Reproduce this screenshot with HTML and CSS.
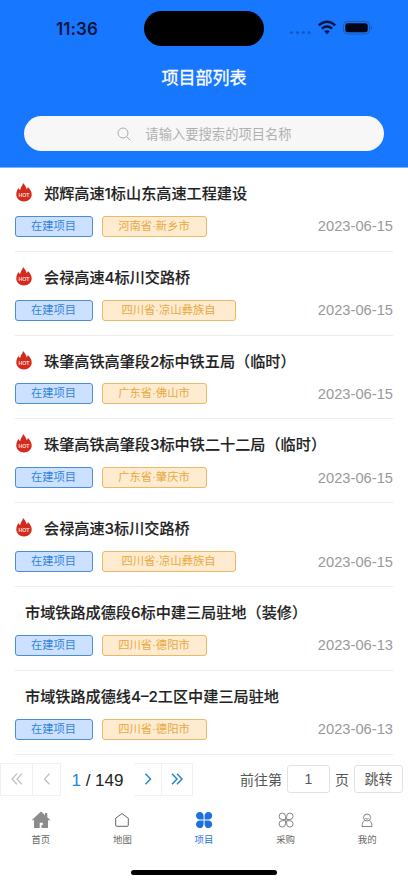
FILE: index.html
```html
<!DOCTYPE html>
<html lang="zh-CN">
<head>
<meta charset="utf-8">
<title>项目部列表</title>
<link rel="stylesheet" href="styles.css">
</head>
<body>
<svg width="0" height="0" class="defs">
  <symbol id="hot" viewBox="0 0 16 19">
    <path d="M7 0C8.600 1.700 10 3.500 10.600 6C11.400 5.500 11.700 4.800 11.900 3.900C14.400 6.300 15.700 8.700 15.700 11.500C15.700 15.600 12.300 18.500 8 18.500S.3 15.600.3 11.500C.3 8.800 1.300 6.800 2.700 5.100C3 6.100 3.400 6.700 4.200 7.100C4.200 4.200 6.700 3 7 0Z" fill="#d32c1f"/>
  </symbol>
</svg>
<div class="screen">
  <header class="header">
    <div class="status">
      <span class="time">11:36</span>
      <span class="island"></span>
      <svg class="signals" width="84" height="18" viewBox="0 0 84 18">
        <g fill="#1459c2"><circle cx="2.500" cy="13.500" r="1.600"/><circle cx="8.500" cy="13.500" r="1.600"/><circle cx="14.300" cy="13.500" r="1.600"/><circle cx="20" cy="13.500" r="1.600"/></g>
        <g fill="none" stroke="#06143f" stroke-width="2.400"><path d="M29.700 6.300Q38 -.7 46.300 6.300"/><path d="M32.800 9.600Q38 5.400 43.200 9.600"/></g>
        <path d="M35.200 12.200Q38 10.200 40.800 12.200L38 15.200Z" fill="#06143f"/>
        <rect x="54.500" y="2.500" width="26" height="12.500" rx="3.800" fill="none" stroke="#2358a5"/>
        <rect x="56.300" y="4.300" width="22.400" height="9" rx="2.300" fill="#020715"/>
        <path d="M82 6.700Q84 8.700 82 10.800Z" fill="#17499c"/>
      </svg>
    </div>
    <h1 class="title">项目部列表</h1>
    <div class="search">
      <svg width="14" height="14" viewBox="0 0 14 14" fill="none" stroke="#aaa" stroke-width="1"><circle cx="6" cy="6" r="5"/><path d="M9.600 9.600L13.200 13.200"/></svg>
      <span>请输入要搜索的项目名称</span>
    </div>
  </header>

  <main class="list">
    <article class="row">
      <h2 class="name"><svg class="flame" viewBox="0 0 16 19"><use href="#hot"/><text x="8" y="13.600" text-anchor="middle" class="hot-text">HOT</text></svg>郑辉高速1标山东高速工程建设</h2>
      <div class="meta"><span class="tag state">在建项目</span><span class="tag place">河南省·新乡市</span><time>2023-06-15</time></div>
    </article>
    <article class="row">
      <h2 class="name"><svg class="flame" viewBox="0 0 16 19"><use href="#hot"/><text x="8" y="13.600" text-anchor="middle" class="hot-text">HOT</text></svg>会禄高速4标川交路桥</h2>
      <div class="meta"><span class="tag state">在建项目</span><span class="tag place wide">四川省·凉山彝族自</span><time>2023-06-15</time></div>
    </article>
    <article class="row">
      <h2 class="name"><svg class="flame" viewBox="0 0 16 19"><use href="#hot"/><text x="8" y="13.600" text-anchor="middle" class="hot-text">HOT</text></svg>珠肇高铁高肇段2标中铁五局（临时）</h2>
      <div class="meta"><span class="tag state">在建项目</span><span class="tag place">广东省·佛山市</span><time>2023-06-15</time></div>
    </article>
    <article class="row">
      <h2 class="name"><svg class="flame" viewBox="0 0 16 19"><use href="#hot"/><text x="8" y="13.600" text-anchor="middle" class="hot-text">HOT</text></svg>珠肇高铁高肇段3标中铁二十二局（临时）</h2>
      <div class="meta"><span class="tag state">在建项目</span><span class="tag place">广东省·肇庆市</span><time>2023-06-15</time></div>
    </article>
    <article class="row">
      <h2 class="name"><svg class="flame" viewBox="0 0 16 19"><use href="#hot"/><text x="8" y="13.600" text-anchor="middle" class="hot-text">HOT</text></svg>会禄高速3标川交路桥</h2>
      <div class="meta"><span class="tag state">在建项目</span><span class="tag place wide">四川省·凉山彝族自</span><time>2023-06-15</time></div>
    </article>
    <article class="row">
      <h2 class="name plain">市域铁路成德段6标中建三局驻地（装修）</h2>
      <div class="meta"><span class="tag state">在建项目</span><span class="tag place">四川省·德阳市</span><time>2023-06-13</time></div>
    </article>
    <article class="row">
      <h2 class="name plain">市域铁路成德线4–2工区中建三局驻地</h2>
      <div class="meta"><span class="tag state">在建项目</span><span class="tag place">四川省·德阳市</span><time>2023-06-13</time></div>
    </article>
  </main>

  <div class="pager">
    <div class="steps off">
      <span class="step first"><svg width="12" height="12" viewBox="0 0 12 12"><path d="M6 .7L1 6L6 11.300M11 .7L6 6L11 11.300"/></svg></span>
      <span class="step"><svg width="8" height="12" viewBox="0 0 8 12"><path d="M6.500 .7L1.500 6L6.500 11.300"/></svg></span>
    </div>
    <div class="count"><b>1</b> / 149</div>
    <div class="steps on">
      <span class="step"><svg width="8" height="12" viewBox="0 0 8 12"><path d="M1.500 .7L6.500 6L1.500 11.300"/></svg></span>
      <span class="step last"><svg width="12" height="12" viewBox="0 0 12 12"><path d="M1 .7L6 6L1 11.300M6 .7L11 6L6 11.300"/></svg></span>
    </div>
    <div class="jump"><span>前往第</span><span class="box num">1</span><span>页</span><span class="box go">跳转</span></div>
  </div>

  <nav class="tabs">
    <div class="tab"><svg width="20" height="20" viewBox="0 0 20 20"><path d="M10 1.500L.6 10.300H3V18H8.700V12.800H11.800V15H10.500V18H17V10.300H19.400L16.300 7.300V3H14V5.200Z" fill="#8c8c8c"/></svg><span>首页</span></div>
    <div class="tab"><svg width="20" height="20" viewBox="0 0 20 20"><path d="M10 3.600L3.700 8.200V15.200Q3.700 16.300 4.800 16.300H15.200Q16.300 16.300 16.300 15.200V8.200Z" fill="none" stroke="#666" stroke-linejoin="round"/></svg><span>地图</span></div>
    <div class="tab active"><svg width="20" height="20" viewBox="0 0 20 20" fill="#1e6fe0"><path d="M9.600 9.600H6A3.800 3.800 0 1 1 9.600 6Z"/><path d="M10.600 9.600H14.200A3.800 3.800 0 1 0 10.600 6Z"/><path d="M9.600 10.500H6A3.800 3.800 0 1 0 9.600 14.100Z"/><path d="M10.600 10.500H14.200A3.800 3.800 0 1 1 10.600 14.100Z"/></svg><span>项目</span></div>
    <div class="tab"><svg width="20" height="20" viewBox="0 0 20 20" fill="none" stroke="#777" stroke-width=".9"><path d="M9.500 9.500H6.300A3.200 3.200 0 1 1 9.500 6.300Z"/><path d="M10.700 9.500H13.900A3.200 3.200 0 1 0 10.700 6.300Z"/><path d="M9.500 10.700H6.300A3.200 3.200 0 1 0 9.500 13.900Z"/><path d="M10.700 10.700H13.900A3.200 3.200 0 1 1 10.700 13.900Z"/></svg><span>采购</span></div>
    <div class="tab"><svg width="20" height="20" viewBox="0 0 20 20" fill="none" stroke="#777" stroke-width=".9"><circle cx="10" cy="7.500" r="3.500"/><path d="M7.700 10.500C5.800 11.500 5.200 13.200 5 16.500H15C14.800 13.200 14.200 11.500 12.300 10.500M8.500 8.400Q10 9.700 11.500 8.400"/></svg><span>我的</span></div>
  </nav>
  <div class="home-bar"></div>
</div>
</body>
</html>
```
FILE: styles.css
```css
* { box-sizing: border-box; }
body {
  margin: 0;
  background: #fff;
  font-family: "Liberation Sans", "Noto Sans CJK SC", sans-serif;
}
.defs { position: absolute; }
.screen {
  width: 408px;
  height: 883px;
  overflow: hidden;
  display: flex;
  flex-direction: column;
}
.header {
  height: 168px;
  flex: none;
  background: #1777ff;
  border-bottom: 1px solid #7db5ff;
}
.status {
  height: 57px;
  display: grid;
  grid-template-columns: 144px 120px 1fr;
  align-items: center;
}
.time {
  padding-left: 56px;
  font: 600 17px/20px Inter, sans-serif;
  letter-spacing: .1px;
  color: #06143f;
}
.island {
  height: 35px;
  border-radius: 18px;
  background: #000;
}
.signals { margin: -2px 0 0 25px; }
.title {
  margin: 9px 0 0;
  text-align: center;
  color: #fff;
  font-size: 17px;
  line-height: 26px;
  font-weight: 400;
  -webkit-text-stroke: .3px #fff;
}
.search {
  margin: 24px 24px 0;
  height: 35px;
  border-radius: 18px;
  background: #f7f7f7;
  display: flex;
  align-items: center;
  justify-content: center;
  gap: 14px;
  padding-left: 1px;
  color: #b0b0b0;
  font-size: 13.3px;
}
.list { padding: 0 15px 0 14.5px; height: 587px; flex: none; }
.row {
  height: 83.83px;
  border-bottom: 1px solid #ebebeb;
  padding-top: 14px;
}
.name {
  margin: 0;
  height: 24px;
  display: flex;
  align-items: center;
  font: 500 15.15px/24px Inter, "Noto Sans CJK SC", sans-serif;
  color: #222;
  -webkit-text-stroke: .12px #222;
  white-space: nowrap;
}
.plain { padding-left: 10.5px; }
.flame { width: 16px; height: 19px; margin: -3px 12.5px 0 1px; flex: none; -webkit-text-stroke: 0; }
.hot-text { font: 700 5.3px "Liberation Sans", sans-serif; fill: #ffd5c8; stroke: none; }
.meta {
  display: flex;
  align-items: center;
  margin-top: 9.3px;
  height: 22px;
}
.tag {
  height: 21px;
  border: 1px solid;
  border-radius: 3px;
  font-size: 11.3px;
  line-height: 19px;
  text-align: center;
  white-space: nowrap;
}
.state { width: 78px; color: #3484dc; background: #cce1ff; border-color: #4c8bd6; }
.place { width: 105px; margin-left: 9px; color: #e6a942; background: #ffebcf; border-color: #e9b865; }
.wide { width: 134px; }
.meta time { margin-left: auto; color: #999; font-size: 14.7px; }
.pager {
  height: 48px;
  flex: none;
  display: flex;
  align-items: center;
  color: #555;
  font-size: 14px;
}
.steps { display: flex; height: 33px; border: 1px solid #f0f0f0; }
.step { width: 28px; display: flex; align-items: center; justify-content: center; }
.step + .step { border-left: 1px solid #f0f0f0; }
.step.first, .step.last { width: 31px; }
.step svg { fill: none; stroke-width: 1.2; }
.off { width: 61px; }
.off .step svg { stroke: #bbb; }
.on { width: 59px; border-left: 0; }
.on .step:first-child { width: 27px; }
.on .step svg { stroke: #2586d2; stroke-width: 1.5; }
.count { width: 73px; padding-top: 4px; text-align: center; font-size: 17px; color: #222; white-space: nowrap; }
.count b { font-weight: 400; color: #2586d2; }
.jump { margin-left: auto; margin-right: 5px; display: flex; align-items: center; }
.box {
  height: 28px;
  border: 1px solid #e2e2e2;
  border-radius: 3px;
  line-height: 26px;
  text-align: center;
}
.num { width: 43px; margin: 0 5px; }
.go { width: 49px; margin-left: 5px; }
.tabs { display: grid; grid-template-columns: repeat(5, 1fr); height: 52px; flex: none; padding-top: 7px; }
.tab {
  display: flex;
  flex-direction: column;
  align-items: center;
  font-size: 9.4px;
  line-height: 14px;
  color: #666;
}
.tab span { margin-top: 3px; }
.active { color: #2374d8; }
.home-bar { width: 146px; height: 5px; border-radius: 3px; background: #000; margin: 15px auto 0; }
```
